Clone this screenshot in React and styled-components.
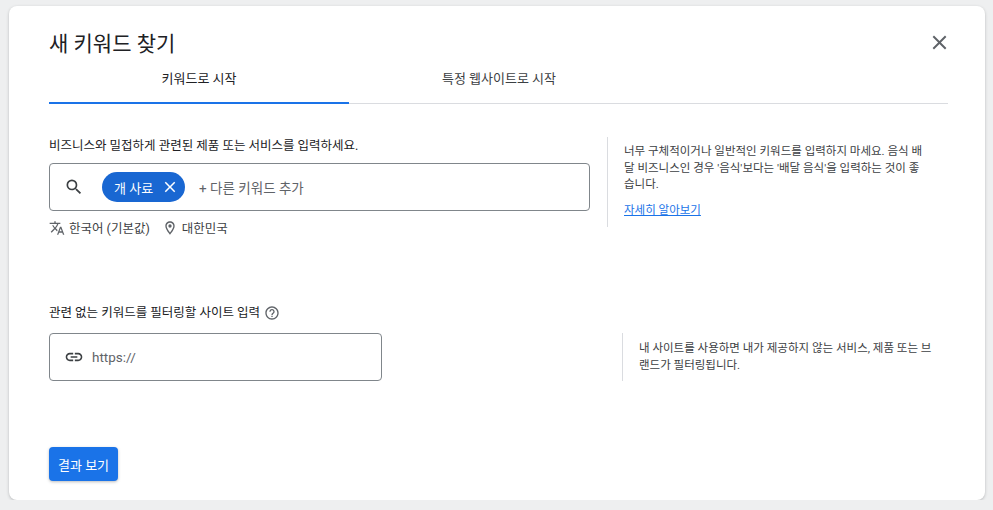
import styled, { createGlobalStyle } from 'styled-components'

const Global = createGlobalStyle`
  body { margin: 0; background: #eeeff0; font-family: Roboto, "Noto Sans CJK KR", sans-serif; color: #202124; }
`

const Card = styled.div`
  margin: 6px 8px 0 9px;
  height: 494px;
  box-sizing: border-box;
  background: #fff;
  border-radius: 8px;
  box-shadow: 0 1px 3px rgba(60,64,67,.3);
  padding: 24px 40px 0 40px;
  position: relative;
`

const Title = styled.h1`
  margin: 0;
  font-size: 21px;
  font-weight: 400;
  line-height: 28px;
`

const Close = styled.button`
  position: absolute;
  top: 26px;
  right: 35px;
  border: 0;
  background: none;
  padding: 0;
  cursor: pointer;
`

const Tabs = styled.div`
  display: flex;
  margin-top: 8px;
  width: 899px;
  border-bottom: 1px solid #dadce0;
`

const Tab = styled.div`
  width: 300px;
  height: 38px;
  box-sizing: border-box;
  padding-top: 2px;
  display: flex;
  justify-content: center;
  font-size: 13px;
  color: ${p => (p.active ? '#202124' : '#3c4043')};
  border-bottom: 2px solid ${p => (p.active ? '#1a73e8' : 'transparent')};
  margin-bottom: -1px;
`

const Section = styled.div`
  display: flex;
  margin-top: ${p => p.top}px;
`

const Main = styled.div`
  width: ${p => p.w}px;
`

const Label = styled.div`
  font-size: 12.5px;
  line-height: 18px;
  display: flex;
  align-items: center;
  gap: 4px;
`

const InputBox = styled.div`
  margin-top: ${p => p.top}px;
  height: 48px;
  box-sizing: border-box;
  border: 1px solid #80868b;
  border-radius: 4px;
  display: flex;
  align-items: center;
  padding-left: 14px;
  gap: 14px;
  font-size: 13.5px;
  color: #5f6368;
`

const Chip = styled.div`
  background: #1967d2;
  color: #fff;
  border-radius: 16px;
  height: 30px;
  padding: 0 6px 0 12px;
  display: flex;
  align-items: center;
  gap: 8px;
  font-size: 13px;
`

const Meta = styled.div`
  display: flex;
  align-items: center;
  gap: 4px;
  margin-top: 7px;
  font-size: 12.5px;
  color: #3c4043;
  span { margin-right: 8px; }
`

const Help = styled.div`
  margin-left: ${p => p.gap}px;
  border-left: 1px solid #dadce0;
  padding-left: 16px;
  width: ${p => p.w}px;
  font-size: 11.5px;
  line-height: 16.5px;
  color: #3c4043;
  align-self: ${p => p.align};
  height: ${p => p.h}px;
  box-sizing: border-box;
  padding-top: ${p => p.pt}px;
`

const Link = styled.a`
  display: inline-block;
  margin-top: 9px;
  color: #1a73e8;
  text-decoration: underline;
`

const Button = styled.button`
  margin-top: 66px;
  background: #1a73e8;
  color: #fff;
  border: 0;
  border-radius: 4px;
  height: 34px;
  padding: 0 9px;
  font-size: 13px;
  font-family: inherit;
  box-shadow: 0 1px 3px rgba(60,64,67,.35);
`

export default function App() {
  return (
    <>
      <Global />
      <Card>
        <Title>새 키워드 찾기</Title>
        <Close>
          <svg width="21" height="21" viewBox="0 0 24 24"><path d="M19 6.41 17.59 5 12 10.59 6.41 5 5 6.41 10.59 12 5 17.59 6.41 19 12 13.41 17.59 19 19 17.59 13.41 12z" fill="#5f6368" transform="translate(-1.5 -1.5) scale(1.125)" /></svg>
        </Close>
        <Tabs>
          <Tab active>키워드로 시작</Tab>
          <Tab>특정 웹사이트로 시작</Tab>
        </Tabs>
        <Section top={33}>
          <Main w={541}>
            <Label>비즈니스와 밀접하게 관련된 제품 또는 서비스를 입력하세요.</Label>
            <InputBox top={8}>
              <svg width="20" height="20" viewBox="0 0 24 24"><path fill="#3c4043" d="M15.5 14h-.79l-.28-.27A6.47 6.47 0 0 0 16 9.5 6.5 6.5 0 1 0 9.5 16c1.61 0 3.09-.59 4.23-1.57l.27.28v.79l5 4.99L20.49 19zm-6 0C7.01 14 5 11.99 5 9.5S7.01 5 9.5 5 14 7.01 14 9.5 11.99 14 9.5 14" /></svg>
              <Chip style={{ marginLeft: 4 }}>
                개 사료
                <svg width="18" height="18" viewBox="0 0 24 24"><path fill="#fff" d="M19 6.41 17.59 5 12 10.59 6.41 5 5 6.41 10.59 12 5 17.59 6.41 19 12 13.41 17.59 19 19 17.59 13.41 12z" /></svg>
              </Chip>
              <span>+ 다른 키워드 추가</span>
            </InputBox>
            <Meta>
              <svg width="16" height="16" viewBox="0 0 24 24"><path fill="#5f6368" d="m12.87 15.07-2.54-2.51.03-.03A17.5 17.5 0 0 0 14.07 6H17V4h-7V2H8v2H1v2h11.170C11.5 7.92 10.44 9.75 9 11.35 8.07 10.32 7.3 9.19 6.69 8h-2c.73 1.63 1.730 3.17 2.98 4.56l-5.09 5.02L4 19l5-5 3.11 3.11zM18.5 10h-2L12 22h2l1.12-3h4.75L21 22h2zm-2.62 7 1.62-4.33L19.12 17z" /></svg>
              <span>한국어 (기본값)</span>
              <svg width="16" height="16" viewBox="0 0 24 24"><path fill="#5f6368" d="M12 2C8.13 2 5 5.13 5 9c0 5.25 7 13 7 13s7-7.75 7-13c0-3.87-3.130-7-7-7M7 9c0-2.76 2.24-5 5-5s5 2.24 5 5c0 2.88-2.88 7.19-5 9.88C9.92 16.21 7 11.85 7 9m5-2.5a2.5 2.5 0 1 0 0 5 2.5 2.5 0 0 0 0-5" /></svg>
              <span>대한민국</span>
            </Meta>
          </Main>
          <Help gap={17} w={320} align="flex-start" h={90} pt={6}>
            너무 구체적이거나 일반적인 키워드를 입력하지 마세요. 음식 배달 비즈니스인 경우 '음식'보다는 '배달 음식'을 입력하는 것이 좋습니다.
            <br />
            <Link href="#">자세히 알아보기</Link>
          </Help>
        </Section>
        <Section top={67}>
          <Main w={333}>
            <Label>
              관련 없는 키워드를 필터링할 사이트 입력
              <svg width="16" height="16" viewBox="0 0 24 24"><path fill="#5f6368" d="M11 18h2v-2h-2zm1-16C6.48 2 2 6.48 2 12s4.48 10 10 10 10-4.48 10-10S17.52 2 12 2m0 18c-4.41 0-8-3.59-8-8s3.59-8 8-8 8 3.59 8 8-3.59 8-8 8m0-14c-2.21 0-4 1.79-4 4h2c0-1.1.9-2 2-2s2 .9 2 2c0 2-3 1.75-3 5h2c0-2.25 3-2.5 3-5 0-2.21-1.79-4-4-4" /></svg>
            </Label>
            <InputBox top={11}>
              <svg width="20" height="20" viewBox="0 0 24 24"><path fill="#3c4043" d="M3.9 12c0-1.71 1.39-3.1 3.1-3.1h4V7H7c-2.76 0-5 2.24-5 5s2.24 5 5 5h4v-1.9H7c-1.71 0-3.1-1.39-3.1-3.1M8 13h8v-2H8zm9-6h-4v1.9h4c1.71 0 3.1 1.39 3.1 3.1s-1.39 3.1-3.1 3.1h-4V17h4c2.76 0 5-2.24 5-5s-2.24-5-5-5" /></svg>
              <span style={{ marginLeft: -6 }}>https://</span>
            </InputBox>
          </Main>
          <Help gap={240} w={310} align="flex-end" h={48} pt={7}>
            내 사이트를 사용하면 내가 제공하지 않는 서비스, 제품 또는 브랜드가 필터링됩니다.
          </Help>
        </Section>
        <Button>결과 보기</Button>
      </Card>
    </>
  )
}
